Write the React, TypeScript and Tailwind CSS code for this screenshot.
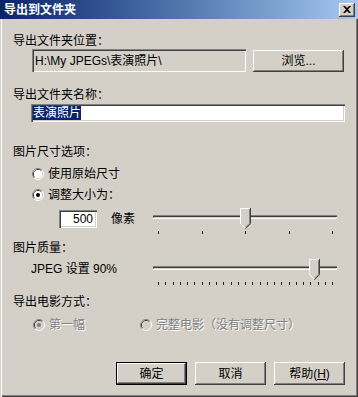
import React from "react";

const sunken =
  "shadow-[inset_1px_1px_#808080,inset_2px_2px_#404040,inset_-1px_-1px_#ffffff,inset_-2px_-2px_#d4d0c8]";
const raised =
  "shadow-[inset_-1px_-1px_#404040,inset_1px_1px_#ffffff,inset_-2px_-2px_#808080,inset_2px_2px_#d4d0c8]";

function Radio({ checked, disabled }: { checked?: boolean; disabled?: boolean }) {
  return (
    <svg width="12" height="12" viewBox="0 0 12 12" className="shrink-0">
      <path d="M2.11 9.89 A5.5 5.5 0 0 1 9.89 2.11" stroke="#808080" fill="none" />
      <path d="M9.89 2.11 A5.5 5.5 0 0 1 2.11 9.89" stroke="#ffffff" fill="none" />
      <path d="M2.82 9.18 A4.5 4.5 0 0 1 9.18 2.82" stroke="#404040" fill="none" />
      <path d="M9.18 2.82 A4.5 4.5 0 0 1 2.82 9.18" stroke="#d4d0c8" fill="none" />
      <circle cx="6" cy="6" r="4" fill={disabled ? "#d4d0c8" : "#ffffff"} />
      {checked && <circle cx="6" cy="6" r="2" fill={disabled ? "#808080" : "#000000"} />}
    </svg>
  );
}

function Thumb() {
  return (
    <svg width="11" height="21" viewBox="0 0 11 21">
      <path d="M0 0 H11 V15.5 L5.5 21 L0 15.5 Z" fill="#d4d0c8" />
      <path d="M0.5 15.5 V0.5 H10" stroke="#ffffff" fill="none" />
      <path d="M0.5 15.5 L5 20" stroke="#ffffff" fill="none" />
      <path d="M10.5 0 V15.7 L5.5 20.7" stroke="#404040" fill="none" />
      <path d="M9.5 1 V15.3 L5.5 19.3" stroke="#808080" fill="none" />
    </svg>
  );
}

function Slider({ ticks, thumbLeft }: { ticks: number; thumbLeft: number }) {
  const items = Array.from({ length: ticks }, (_, i) => 8 + (i * 174) / (ticks - 1));
  return (
    <div className="relative w-[190px] h-[30px] shrink-0">
      <div className="absolute left-[3px] top-[10px] w-[184px] h-[4px] bg-[#d4d0c8] shadow-[inset_0_1px_#808080,inset_0_2px_#404040,inset_0_-1px_#ffffff,inset_1px_0_#808080,inset_-1px_0_#ffffff]" />
      {items.map((x, i) => (
        <div
          key={i}
          className="absolute top-[26px] w-[1px] h-[3px] bg-[#202020]"
          style={{ left: Math.round(x) }}
        />
      ))}
      <div className="absolute top-[3px]" style={{ left: thumbLeft }}>
        <Thumb />
      </div>
    </div>
  );
}

function Button({ children, isDefault }: { children: React.ReactNode; isDefault?: boolean }) {
  return (
    <div
      className={
        "w-[71px] h-[23px] flex items-center justify-center bg-[#d4d0c8] text-[12px] text-black " +
        (isDefault ? "border border-black " : "") +
        raised
      }
    >
      {children}
    </div>
  );
}

export default function App() {
  return (
    <div className="w-[358px] h-[397px] bg-[#d4d0c8] font-['Liberation_Sans','Noto_Sans_CJK_SC',sans-serif] text-[12px] leading-[16px] text-black flex flex-col shadow-[inset_1px_0_#d4d0c8,inset_2px_0_#ffffff,inset_-1px_-1px_#404040,inset_-2px_-2px_#808080] overflow-hidden">
      {/* Title bar */}
      <div className="h-[19px] shrink-0 flex items-center justify-between pl-[4px] pr-[3px] bg-linear-to-r from-[#0a246a] to-[#a6caf0]">
        <span className="text-white font-bold text-[12px] leading-[16px]">导出到文件夹</span>
        <div className={"w-[16px] h-[14px] bg-[#d4d0c8] flex items-center justify-center " + raised}>
          <svg width="8" height="7" viewBox="0 0 8 7">
            <path d="M0 0 L2 0 L4 2 L6 0 L8 0 L5 3.5 L8 7 L6 7 L4 5 L2 7 L0 7 L3 3.5 Z" fill="#000" />
          </svg>
        </div>
      </div>

      <div className="flex flex-col px-[13px]">
        <div className="mt-[14px]">导出文件夹位置：</div>
        <div className="flex items-start">
          <div className={"ml-[19px] w-[214px] h-[23px] flex items-center pl-[3px] bg-[#d4d0c8] " + sunken}>
            H:\My JPEGs\表演照片\
          </div>
          <div className="ml-[7px] mt-[1px] w-[91px] h-[22px]">
            <div className={"w-[91px] h-[22px] flex items-center justify-center bg-[#d4d0c8] " + raised}>浏览...</div>
          </div>
        </div>

        <div className="mt-[15px]">导出文件夹名称：</div>
        <div className={"mt-[1px] ml-[18px] w-[314px] h-[18px] bg-white flex items-center pl-[2px] " + sunken}>
          <span className="bg-[#0a246a] text-white leading-[14px] px-[0px]">表演照片</span>
        </div>

        <div className="mt-[22px]">图片尺寸选项：</div>
        <div className="mt-[6px] ml-[19px] flex items-center gap-[4px] h-[16px]">
          <Radio />
          <span>使用原始尺寸</span>
        </div>
        <div className="mt-[5px] ml-[19px] flex items-center gap-[4px] h-[16px]">
          <Radio checked />
          <span>调整大小为：</span>
        </div>
        <div className="mt-[2px] flex">
          <div className="w-[137px] flex items-start">
            <div className={"ml-[46px] mt-[5px] w-[38px] h-[18px] bg-white flex items-center justify-end pr-[4px] " + sunken}>
              500
            </div>
            <div className="ml-[14px] mt-[6px]">像素</div>
          </div>
          <Slider ticks={5} thumbLeft={90} />
        </div>

        <div className="mt-[5px]">图片质量：</div>
        <div className="flex">
          <div className="w-[137px] pl-[18px] mt-[5px]">JPEG 设置 90%</div>
          <Slider ticks={25} thumbLeft={159} />
        </div>

        <div className="mt-[8px]">导出电影方式：</div>
        <div className="mt-[7px] flex items-center h-[16px] text-[#808080] [text-shadow:1px_1px_#ffffff]">
          <div className="ml-[20px] flex items-center gap-[4px] w-[107px]">
            <Radio checked disabled />
            <span>第一幅</span>
          </div>
          <div className="flex items-center gap-[4px]">
            <Radio disabled />
            <span>完整电影（没有调整尺寸）</span>
          </div>
        </div>

        <div className="mt-[29px] flex justify-end gap-[8px]">
          <Button isDefault>确定</Button>
          <Button>取消</Button>
          <Button>
            帮助(<span className="underline">H</span>)
          </Button>
        </div>
      </div>
    </div>
  );
}
